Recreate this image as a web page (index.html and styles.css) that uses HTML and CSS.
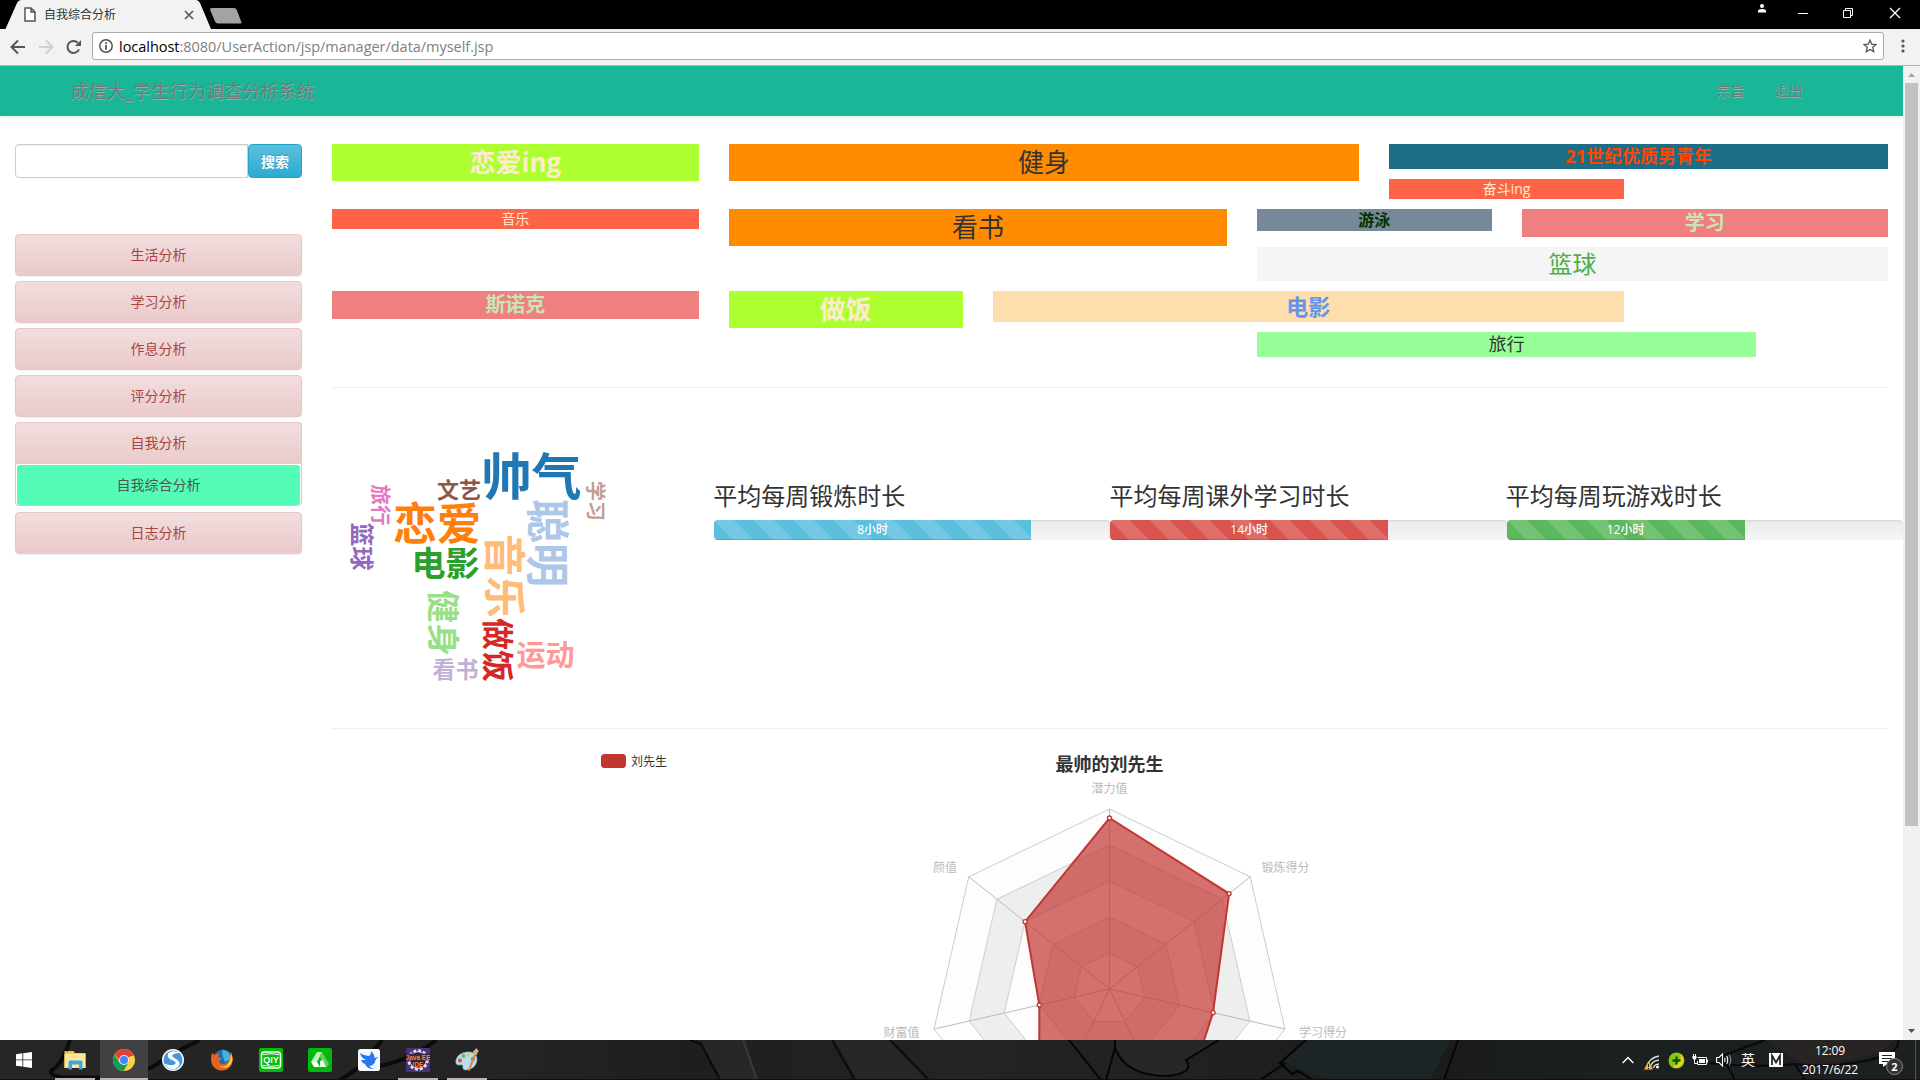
FILE: index.html
```html
<!DOCTYPE html>
<html lang="zh-CN">
<head>
<meta charset="utf-8">
<title>自我综合分析</title>
<link rel="stylesheet" href="styles.css">
</head>
<body>
<div class="window">
  <header class="tabstrip">
    <svg class="tab-shape" width="250" height="29" viewBox="0 0 250 29">
      <path d="M0 29H5.5L17 3Q18.500 0 21 0H196Q198.500 0 200 3L211 29Z" fill="#f2f2f2"/>
      <path d="M212.500 8H234Q236 8 236.800 10L241.500 22.500Q242 23.500 240 23.500H218Q216 23.500 215 21.500L210 9.500Q209.600 8 212.500 8Z" fill="#a3a3a3"/>
    </svg>
    <div class="tab">
      <svg width="12" height="16" viewBox="0 0 12 16"><path d="M1 1H7L11 5V14H1ZM7 1V5H11" fill="#fff" stroke="#555" stroke-width="1.500"/></svg>
      <span class="tab-title">自我综合分析</span>
      <svg width="10" height="10" viewBox="0 0 10 10"><path d="M1 1L9 9M9 1L1 9" stroke="#5a5a5a" stroke-width="1.700"/></svg>
    </div>
    <div class="window-controls">
      <svg class="profile" width="8" height="9" viewBox="0 0 8 9"><circle cx="4" cy="2" r="2" fill="#fff"/><path d="M0 8.500V7Q0 5 4 5T8 7V8.500Z" fill="#fff"/></svg>
      <svg width="46" height="26" viewBox="0 0 46 26"><path d="M18 13.500H28" stroke="#fff"/></svg>
      <svg width="46" height="26" viewBox="0 0 46 26"><path d="M17.500 10.500H24.500V17.500H17.500ZM19.500 10V8.500H26.500V15.500H25" fill="none" stroke="#fff"/></svg>
      <svg width="46" height="26" viewBox="0 0 46 26"><path d="M18 8L28 18M28 8L18 18" stroke="#fff" stroke-width="1.300"/></svg>
    </div>
  </header>

  <div class="toolbar">
    <svg class="nav-icons" width="73" height="20" viewBox="0 0 73 20" fill="none" stroke-width="2">
      <path d="M17 10H4M10 3.500L3.500 10L10 16.500" stroke="#555"/>
      <path d="M31 10H44M38 3.500L44.500 10L38 16.500" stroke="#d0d0d0"/>
      <path d="M71.500 12.300A6 6 0 1 1 70.300 5.700" stroke="#555" transform="translate(-.5 0)"/>
      <path d="M73 3V9H67Z" fill="#555"/>
    </svg>
    <div class="address">
      <svg width="14" height="14" viewBox="0 0 14 14"><circle cx="7" cy="7" r="6.200" fill="none" stroke="#555" stroke-width="1.500"/><path d="M7 6V10.800M7 3.200V5" stroke="#555" stroke-width="1.800"/></svg>
      <span class="url"><b>localhost</b>:8080/UserAction/jsp/manager/data/myself.jsp</span>
      <svg width="14" height="14" viewBox="0 0 14 14"><path d="M7 1.200L8.700 5.100L13 5.500L9.800 8.300L10.700 12.600L7 10.400L3.300 12.600L4.200 8.300L1 5.500L5.300 5.100Z" fill="none" stroke="#555" stroke-width="1.300"/></svg>
    </div>
    <svg class="menu-dots" width="4" height="14" viewBox="0 0 4 14" fill="#555"><circle cx="2" cy="2" r="1.600"/><circle cx="2" cy="7" r="1.600"/><circle cx="2" cy="12" r="1.600"/></svg>
  </div>

  <div class="viewport">
    <div class="page">
      <nav class="navbar">
        <span class="brand">成信大_学生行为调查分析系统</span>
        <span class="nav-link">宗旨</span>
        <span class="nav-link">退出</span>
      </nav>
      <div class="content">
        <aside class="sidebar">
          <form class="search"><input type="text" aria-label="搜索"><button type="button">搜索</button></form>
          <a class="item">生活分析</a>
          <a class="item">学习分析</a>
          <a class="item">作息分析</a>
          <a class="item">评分分析</a>
          <div class="group">
            <a class="item item-open">自我分析</a>
            <div class="sub"><a class="sub-active">自我综合分析</a></div>
          </div>
          <a class="item">日志分析</a>
        </aside>

        <main class="main">
          <section class="tags">
            <span class="tag c1 s3 lime">恋爱ing</span>
            <span class="tag c4 s5 orange">健身</span>
            <span class="tag c9 s4 teal">21世纪优质男青年</span>
            <span class="tag r2 c9 s2 tomato">奋斗ing</span>
            <span class="tag r3 c1 s3 tomato">音乐</span>
            <span class="tag r3 c4 s4 orange">看书</span>
            <span class="tag r3 c8 s2 slate">游泳</span>
            <span class="tag r3 c10 s3 coral">学习</span>
            <span class="tag r4 c8 s5 smoke">篮球</span>
            <span class="tag r5 c1 s3 coral">斯诺克</span>
            <span class="tag r5 c4 s2 lime">做饭</span>
            <span class="tag r5 c6 s5 wheat">电影</span>
            <span class="tag r6 c8 s4 mint">旅行</span>
          </section>

          <section class="stats">
            <svg class="cloud" width="382" height="340" viewBox="332 388 382 340">
              <g transform="translate(531.500 475.500)"><text dy="-.06em" font-size="50" fill="#1f77b4">帅气</text></g>
              <g transform="translate(547.200 543) rotate(90)"><text dy="-.06em" font-size="44" fill="#aec7e8">聪明</text></g>
              <g transform="translate(437 524)"><text dy="-.06em" font-size="44" fill="#ff7f0e">恋爱</text></g>
              <g transform="translate(505 576) rotate(90)"><text dy="-.06em" font-size="42" fill="#ffbb78">音乐</text></g>
              <g transform="translate(445.500 563.500)"><text dy="-.06em" font-size="34" fill="#2ca02c">电影</text></g>
              <g transform="translate(443.500 623) rotate(90)"><text dy="-.06em" font-size="33" fill="#98df8a">健身</text></g>
              <g transform="translate(498 650) rotate(90)"><text dy="-.06em" font-size="32" fill="#d62728">做饭</text></g>
              <g transform="translate(545.500 655)"><text dy="-.06em" font-size="29" fill="#ff9896">运动</text></g>
              <g transform="translate(362 546.500) rotate(90)"><text dy="-.06em" font-size="24" fill="#9467bd">篮球</text></g>
              <g transform="translate(455.500 669)"><text dy="-.06em" font-size="23" fill="#c5b0d5">看书</text></g>
              <g transform="translate(459 489)"><text dy="-.06em" font-size="22" fill="#8c564b">文艺</text></g>
              <g transform="translate(595.600 501) rotate(90)"><text dy="-.06em" font-size="20" fill="#c49c94">学习</text></g>
              <g transform="translate(380.700 505) rotate(90)"><text dy="-.06em" font-size="20.500" fill="#e377c2">旅行</text></g>
            </svg>
            <div class="bars">
              <div class="bar-col"><h3>平均每周锻炼时长</h3><div class="progress"><div class="fill info" style="width:80%">8小时</div></div></div>
              <div class="bar-col"><h3>平均每周课外学习时长</h3><div class="progress"><div class="fill danger" style="width:70%">14小时</div></div></div>
              <div class="bar-col"><h3>平均每周玩游戏时长</h3><div class="progress"><div class="fill success" style="width:60%">12小时</div></div></div>
            </div>
          </section>

          <svg class="radar" id="radar" width="1556" height="311" viewBox="332 729 1556 311">
            <rect x="601" y="754" width="25" height="14" rx="3.500" fill="#c23531"/>
            <text x="631" y="766" fill="#333">刘先生</text>
            <text class="radar-title" x="1109.500" y="770.500">最帅的刘先生</text>
            <g id="web"></g>
            <g fill="#bbb">
              <text x="1109.500" y="792.500" text-anchor="middle">潜力值</text>
              <text x="957" y="871.500" text-anchor="end">颜值</text>
              <text x="1261.500" y="871.500">锻炼得分</text>
              <text x="919.500" y="1036.500" text-anchor="end">财富值</text>
              <text x="1299" y="1036.500">学习得分</text>
            </g>
          </svg>
        </main>
      </div>
    </div>
    <div class="scrollbar">
      <svg width="17" height="17" viewBox="0 0 17 17"><path d="M5 11L8.500 7L12 11Z" fill="#a3a3a3"/></svg>
      <div class="thumb"></div>
      <svg width="17" height="17" viewBox="0 0 17 17"><path d="M5 6L8.500 10L12 6Z" fill="#505050"/></svg>
    </div>
  </div>

  <footer class="taskbar">
    <svg class="wallpaper" width="1920" height="40" viewBox="0 0 1920 40" fill="none">
      <path d="M70 0Q62 25 52 30Q48 35 60 37L115 38Q145 35 170 15L200 0M340 40L360 27L382 0M368 28Q410 22 436 0" stroke="#0b0b0b" stroke-width="4"/>
      <path d="M700 0L722 40H758L746 0ZM835 0L858 40H925L893 0Z" fill="#272628"/>
      <path d="M690 0L701 4L720 40M832 0L855 40M890 0L929 40" stroke="#0a0a0a" stroke-width="2"/>
      <path d="M743 0L757 40" stroke="#3a3a3b" stroke-width="2"/>
      <path d="M1116 0H1220L1187 20Q1190 35 1168 36Q1125 38 1114 0Z" fill="#272725"/>
      <path d="M1306 0H1450L1430 40H1330L1283 22Z" fill="#1c2425"/>
      <path d="M1069 0L1101 40M1115 0V8Q1125 36 1168 36Q1195 33 1186 20L1219 0M1115 8L1106 40M1306 0L1280 23L1284 24L1260 40M1280 23L1292 34L1298 31L1313 40M1458 0L1444 40" stroke="#050505" stroke-width="2"/>
      <path d="M1768 0H1895L1880 12Q1840 26 1800 23Z" fill="#292424"/>
      <path d="M1765 0L1722 16L1735 40M1710 23Q1760 28 1795 24L1805 40M1795 24Q1840 30 1888 15Q1900 8 1898 0" stroke="#080909" stroke-width="2"/>
      <path d="M0 39.500H1920" stroke="#100e10"/>
      <path d="M1915.500 0V40" stroke="#555"/>
    </svg>
    <div class="apps">
      <span class="app start"><svg width="18" height="18" viewBox="0 0 18 18" fill="#fff"><path d="M1 3.200L7.400 2.300V8.400H1ZM8.200 2.200L17 1V8.400H8.200ZM1 9.300H7.400V15.600L1 14.700ZM8.200 9.300H17V17L8.200 15.800Z"/></svg></span>
      <span class="app running"><svg width="24" height="24" viewBox="0 0 24 24"><path d="M1.500 3H10.500L12 5H22.500V20H1.500Z" fill="#f6c64b"/><path d="M1.500 6H22.500V20H1.500Z" fill="#ffe695"/><path d="M5.500 21.500V14Q5.500 12.500 7 12.500H18Q19.500 12.500 19.500 14V21.500H16V16.500H9V21.500Z" fill="#38a8e8"/><path d="M3 3.500H5" stroke="#29a0e0"/></svg></span>
      <span class="app running current"><svg width="24" height="24" viewBox="0 0 24 24"><circle cx="12" cy="12" r="11" fill="#ffd042"/><path d="M12 12L2.470 6.500A11 11 0 0 1 21.500 6.500Z" fill="#db4437"/><path d="M2.470 6.500A11 11 0 0 0 11.500 23L16.500 14.500L12 12L7.500 15Z" fill="#109d58"/><path d="M3 6L8 14.500L12 8H21.500A11 11 0 0 0 3 6Z" fill="#db4437"/><circle cx="12" cy="12" r="5" fill="#f1f1f1"/><circle cx="12" cy="12" r="4" fill="#4285f4"/></svg></span>
      <span class="app"><svg width="24" height="24" viewBox="0 0 24 24"><circle cx="12" cy="12" r="11" fill="#f5fafd"/><circle cx="12" cy="12" r="9.500" fill="#4596de"/><path d="M19.500 5Q10 1 7 6Q5.500 10 12 12.500Q16.500 14.500 13.500 16.500Q9.500 18.500 3.500 15.500Q8 23 15 20.500Q21 17 17 12.500Q15 10.500 12 9Q10 7.500 13 6Q16 5.200 19.500 5Z" fill="#fff"/></svg></span>
      <span class="app"><svg width="24" height="24" viewBox="0 0 24 24"><circle cx="13" cy="11" r="9.500" fill="#1b6fb4"/><path d="M12 2Q20 2 21 11L15 14Q12 8 12 2Z" fill="#46b4dc"/><path d="M2 5L5 7Q7 5 9 6L8 9L12 11L9 13Q10 17 15 16Q20 14 20 9L21 4Q25 13 20 19Q15 24 8 22Q1 19 1 11Q1 8 2 5Z" fill="#e66322"/><path d="M21 5Q25 14 18 19Q13 21 9 18Q20 21 21 5Z" fill="#ffc52e"/></svg></span>
      <span class="app"><svg width="24" height="24" viewBox="0 0 24 24"><rect width="24" height="24" rx="2" fill="#00be06"/><rect x="2.500" y="4" width="19" height="16" rx="3" fill="none" stroke="#fff" stroke-width="1.500"/><path d="M4 6.500Q12 5 20 6.500M4 17.500Q12 19 20 17.500" stroke="#fff" fill="none"/><text class="qiy" x="12" y="15.300" text-anchor="middle">QIY</text></svg></span>
      <span class="app"><svg width="24" height="24" viewBox="0 0 24 24"><rect width="24" height="24" rx="2" fill="#00b90d"/><path d="M9 4H14L9 14H3Z" fill="#c9efc8"/><path d="M3 14H9L12 19H6Z" fill="#fff"/><path d="M14 4L21 16L18 20L12 9Z" fill="#62ce62"/><path d="M12 13L15 12L18 19H12Z" fill="#eaf7e7"/></svg></span>
      <span class="app"><svg width="24" height="24" viewBox="0 0 24 24"><rect x="1" y="1" width="22" height="22" rx="2.500" fill="#f5faff"/><path d="M3 5Q7 8 12 8Q14 7 14 3Q18 7 17.500 10L22 8.500Q18 11 18 14Q16 18 12 18Q14 20 17 21Q10 21 8 16Q5 15 4 12L9 12Q4 10 3 5Z" fill="#2877ed"/></svg></span>
      <span class="app running"><svg width="24" height="24" viewBox="0 0 24 24"><rect width="24" height="24" rx="1" fill="#49327a"/><circle cx="12" cy="12" r="9.200" fill="none" stroke="#e7e3ea" stroke-width="3" stroke-dasharray="3 1.800"/><circle cx="12" cy="12" r="8.300" fill="#30204a" stroke="#e7e3ea"/><rect y="5.500" width="24" height="7" fill="#3a2650"/><text class="eclipse" x="12" y="11.500" text-anchor="middle">Java EE</text><text class="eclipse" x="12" y="18.500" text-anchor="middle">IDE</text></svg></span>
      <span class="app running"><svg width="24" height="24" viewBox="0 0 24 24"><path d="M12 4Q22 3 22 12Q21 21 11 22Q7 22 8 18Q8 16 4 17Q0 17 1 12Q3 5 12 4Z" fill="#b9dcee" stroke="#8eb8cf" stroke-width=".6"/><circle cx="5" cy="12.500" r="2" fill="#e24c3c"/><circle cx="8.500" cy="8" r="2" fill="#67bd4c"/><circle cx="13.500" cy="6.800" r="1.800" fill="#f5c63c"/><circle cx="18" cy="11" r="2" fill="#3c83d6"/><path d="M13 22L19 6L21 7L15 22Q14 24 13 22Z" fill="#e08a2c"/><path d="M18 3Q20 3 21 0L24 3Q22 4 22 7L19 6Z" fill="#d9b084"/></svg></span>
    </div>
    <div class="tray">
      <svg width="12" height="8" viewBox="0 0 12 8"><path d="M.7 7L6 1.500L11.300 7" fill="none" stroke="#fff" stroke-width="1.400"/></svg>
      <svg class="wifi" width="16" height="16" viewBox="0 0 16 16"><g fill="none" stroke="#ddd" stroke-width="1.400"><path d="M3 14Q4 4 15 2M6 14Q7 7 15 6M9.500 14Q10 10.500 15 10"/></g><circle cx="13.500" cy="13" r="1.500" fill="#fff"/><path d="M0 15.500L4.500 7L9 15.500Z" fill="#f6b623"/><path d="M4.500 10V13M4.500 14V15" stroke="#222"/></svg>
      <svg class="shield" width="17" height="17" viewBox="0 0 17 17"><circle cx="8.500" cy="8.500" r="8" fill="#86c714"/><path d="M13 2A8 8 0 0 1 4 15Q13 13 13 2Z" fill="#f5cf21"/><path d="M8.500 4.500V12.500M4.500 8.500H12.500" stroke="#174d13" stroke-width="2.300"/></svg>
      <svg class="power" width="17" height="12" viewBox="0 0 17 12"><path d="M5.500 3.500H14.500V10.500H5.500V7M15.500 5.500V8.500M2.500 5V9.500H5M1.500 0V2M3.500 0V2" fill="none" stroke="#fff"/><path d="M.5 2H4.500V4L3.500 5.500H1.500L.5 4ZM7 5H13V9H7Z" fill="#fff"/></svg>
      <svg class="sound" width="17" height="14" viewBox="0 0 17 14" fill="none" stroke="#fff" stroke-width="1.100"><path d="M.6 4.500H3L6.500 1V13L3 9.500H.6ZM8.500 5Q9.500 7 8.500 9M10.700 3Q12.700 7 10.700 11"/><path d="M13 1.500Q16.500 7 13 12.500" stroke="#888"/></svg>
      <span class="ime">英</span>
      <svg class="mbox" width="14" height="14" viewBox="0 0 14 14"><rect width="14" height="14" fill="#fff"/><path d="M3 12V2.500L7 9.500L11 2.500V12" fill="none" stroke="#222" stroke-width="1.700"/></svg>
      <div class="clock"><span>12:09</span><span>2017/6/22</span></div>
      <div class="notice">
        <svg width="16" height="15" viewBox="0 0 16 15"><path d="M0 0H16V12H8L4 15V12H0Z" fill="#fff"/><path d="M3 3.500H13M3 6.500H13M3 9.500H9" stroke="#222"/></svg>
        <span class="badge">2</span>
      </div>
    </div>
  </footer>
</div>
<script src="radar.js"></script>
</body>
</html>
```
FILE: styles.css
```css
* { box-sizing: border-box; }
body {
  margin: 0;
  background: #fff;
  color: #333;
  font: 14px/20px "Open Sans", "Noto Sans CJK SC", sans-serif;
  overflow: hidden;
}
svg { display: block; flex: none; }
.window { display: flex; flex-direction: column; width: 1920px; height: 1080px; }

.tabstrip { position: relative; display: flex; justify-content: space-between; height: 29px; background: #000; }
.tab-shape { position: absolute; left: 0; top: 0; }
.tab { position: relative; display: flex; align-items: center; width: 194px; padding-left: 24px; }
.tab-title { flex: 1; margin-left: 8px; font-size: 12px; line-height: 28px; }
.window-controls { display: flex; padding-right: 2px; }
.profile { margin: 4px 14px 0 0; }

.toolbar {
  display: flex; align-items: center; height: 37px; padding: 0 10px 2px 8px;
  background: #f2f2f2; border-bottom: 1px solid #b3b3b3;
}
.nav-icons { margin-top: 1px; }
.address {
  display: flex; align-items: center; width: 1792px; height: 28px; margin: 0 17px 0 11px; padding: 0 6px;
  background: #fff; border: 1px solid #a9a9a9; border-radius: 3px;
}
.url { flex: 1; margin-left: 6px; padding-top: 1px; color: #808080; font-size: 14.5px; line-height: 25px; letter-spacing: -.03px; white-space: nowrap; }
.url b { color: #000; font-weight: 400; }

.viewport { display: flex; height: 974px; }
.page { width: 1903px; height: 974px; overflow: hidden; }
.navbar {
  display: flex; align-items: center; height: 50px; padding: 0 85px 0 71px;
  background: #1bb698; box-shadow: 0 1px 5px rgba(0, 0, 0, .1);
  color: #777; text-shadow: 0 1px 0 rgba(255, 255, 255, .3);
}
.brand { flex: 1; font-size: 18px; letter-spacing: .17px; }
.nav-link { padding: 0 15px; }
.content { display: flex; padding-top: 28px; }

.sidebar { display: flex; flex: none; flex-direction: column; width: 317.17px; padding: 0 15px; }
.search { display: flex; height: 34px; margin-bottom: 56px; }
.search input {
  width: 233px; border: 1px solid #ccc; border-radius: 4px 0 0 4px;
  box-shadow: inset 0 1px 1px rgba(0, 0, 0, .075);
}
.search button {
  width: 54px; padding: 0; border: 1px solid #28a4c9; border-radius: 4px;
  background: linear-gradient(#5bc0de, #2aabd2);
  color: #fff; font: bold 14px/20px "Noto Sans CJK SC", sans-serif;
  text-shadow: 0 -1px 0 rgba(0, 0, 0, .2);
}
.item {
  height: 42px; margin-bottom: 5px; border: 1px solid #e9c6ca; border-radius: 4px;
  background: linear-gradient(#f2dede, #eacacb);
  box-shadow: 0 1px 2px rgba(0, 0, 0, .06);
  color: #a94442; line-height: 40px; text-align: center;
}
.group { margin-bottom: 6px; }
.item-open { display: block; margin-bottom: 0; border-bottom: 0; border-radius: 4px 4px 0 0; box-shadow: none; }
.sub { height: 42px; padding: 1px; border: 1px solid #e3c5c9; border-top: 0; border-radius: 0 0 4px 4px; }
.sub-active { display: block; height: 40px; border-radius: 3px; background: #54fcb7; color: #555; line-height: 40px; text-align: center; }

.main { display: flex; flex: none; flex-direction: column; width: 1585.83px; padding: 0 15px; }
.tags {
  display: grid; grid-template-columns: repeat(12, 1fr); grid-template-rows: 35px 30px 38px 44px 41px 55px;
  column-gap: 30px; align-items: start; height: 244px; border-bottom: 1px solid #eee;
}
.tag { grid-row: 1; text-align: center; white-space: nowrap; }
.r2 { grid-row: 2; } .r3 { grid-row: 3; } .r4 { grid-row: 4; } .r5 { grid-row: 5; } .r6 { grid-row: 6; }
.c1 { grid-column-start: 1; } .c4 { grid-column-start: 4; } .c6 { grid-column-start: 6; }
.c8 { grid-column-start: 8; } .c9 { grid-column-start: 9; } .c10 { grid-column-start: 10; }
.s2 { grid-column-end: span 2; } .s3 { grid-column-end: span 3; }
.s4 { grid-column-end: span 4; } .s5 { grid-column-end: span 5; }
.lime { background: #adff2f; color: #ffebcd; font-size: 26px; font-weight: 700; line-height: 37px; }
.orange { background: #ff8c00; font-size: 26px; line-height: 37px; }
.teal { background: #1c6d85; color: #ff4500; font-size: 18px; font-weight: 700; line-height: 25px; }
.tomato { background: #ff6347; color: #ffebcd; font-size: 14px; line-height: 20px; }
.slate { background: #789; color: #030; font-size: 16px; font-weight: 700; line-height: 22px; }
.coral { background: #f08080; color: #c7e6b6; font-size: 20px; font-weight: 700; line-height: 28px; }
.smoke { background: #f5f5f5; color: #4cae4c; font-size: 24px; line-height: 34px; }
.wheat { background: #ffdead; color: #6495ed; font-size: 22px; font-weight: 700; line-height: 31px; }
.mint { background: #98ff98; font-size: 18px; line-height: 25px; }

.stats { display: flex; height: 341px; border-bottom: 1px solid #eee; }
.cloud text { font-family: "Noto Sans CJK SC", sans-serif; font-weight: 700; text-anchor: middle; dominant-baseline: central; }
.bars { display: flex; flex: none; width: 1189px; padding-top: 94px; }
.bar-col { flex: 1; }
.bar-col h3 { margin: 0 0 11px; font-size: 24px; font-weight: 400; line-height: 27px; white-space: nowrap; text-indent: -1px; }
.progress { height: 20px; overflow: hidden; border-radius: 4px; background: linear-gradient(#ebebeb, #f5f5f5); box-shadow: inset 0 1px 2px rgba(0, 0, 0, .1); }
.fill {
  height: 20px; color: #fff; font-size: 12px; font-weight: 500; line-height: 20px; text-align: center;
  background-image: linear-gradient(45deg, rgba(255, 255, 255, .15) 25%, transparent 25%, transparent 50%, rgba(255, 255, 255, .15) 50%, rgba(255, 255, 255, .15) 75%, transparent 75%, transparent);
  background-size: 40px 40px; box-shadow: inset 0 -1px 0 rgba(0, 0, 0, .15);
}
.info { background-color: #5bc0de; }
.danger { background-color: #d9534f; }
.success { background-color: #5cb85c; }
.radar text { font-size: 12px; }
.radar .radar-title { font-size: 18px; font-weight: 700; fill: #333; text-anchor: middle; }

.scrollbar { display: flex; flex-direction: column; width: 17px; background: #f1f1f1; }
.thumb { width: 13px; height: 743px; margin: 0 auto auto 2px; background: #c1c1c1; }

.taskbar {
  position: relative; display: flex; justify-content: space-between; height: 40px;
  background: linear-gradient(90deg, #262626 0, #232323 28%, #201e1d 36%, #242325 50%, #222120 62%, #1a1b1b 73%, #1b2020 85%, #1d1f20 100%);
}
.wallpaper { position: absolute; left: 0; top: 0; }
.apps, .tray { position: relative; display: flex; }
.app { display: flex; align-items: center; justify-content: center; width: 49px; height: 40px; }
.start { width: 50px; padding-right: 2px; }
.running { background: linear-gradient(#b9b4b6, #b9b4b6) center bottom / 40px 2px no-repeat; }
.current { background: linear-gradient(#b9b4b6, #b9b4b6) center bottom / 48px 2px no-repeat, linear-gradient(#414141, #414141) center / 48px 40px no-repeat; }
.qiy { font: 700 9px "Liberation Sans", sans-serif; fill: #fff; }
.eclipse { font: 700 6.500px "Liberation Sans", sans-serif; fill: #f58a22; }

.tray { align-items: center; padding-right: 17px; color: #fff; }
.wifi { margin: 3px 0 0 10px; }
.shield { margin-left: 8px; }
.power { margin-left: 7px; }
.sound { margin-left: 7px; }
.ime { margin-left: 8px; font-size: 14px; }
.mbox { margin-left: 14px; }
.clock { display: flex; flex-direction: column; width: 60px; margin-left: 17px; font-size: 12px; line-height: 19px; text-align: center; letter-spacing: -.1px; }
.notice { position: relative; width: 24px; height: 40px; margin-left: 19px; padding-top: 12px; }
.badge {
  position: absolute; left: 7px; top: 18px; width: 17px; height: 17px; border: 1px solid #8b8b8b; border-radius: 50%;
  background: #333; font-size: 11px; font-weight: 700; line-height: 15px; text-align: center;
}
```
FILE: radar.js
```js
const center = [1109.5, 989];
const radius = 180;
const axes = 7;
const values = [0.95, 0.85, 0.59, 0.85, 0.9, 0.4, 0.6];

const point = (i, k) => {
  const a = (i * 2 * Math.PI) / axes;
  return [center[0] + Math.sin(a) * radius * k, center[1] - Math.cos(a) * radius * k];
};
const ring = (k) => Array.from({ length: axes }, (_, i) => point(i, k).join(",")).join(" ");

let out = "";
for (let level = 5; level > 0; level--) {
  const fill = level % 2 ? "#fdfdfd" : "#eeeeee";
  out += `<polygon points="${ring(level / 5)}" fill="${fill}" stroke="#ccc"/>`;
}
for (let i = 0; i < axes; i++) {
  const [x, y] = point(i, 1);
  out += `<line x1="${center[0]}" y1="${center[1]}" x2="${x}" y2="${y}" stroke="#bbb"/>`;
}
const data = values.map((v, i) => point(i, v));
out += `<polygon points="${data.map((p) => p.join(",")).join(" ")}" fill="#c23531" fill-opacity=".7" stroke="#c23531" stroke-width="2"/>`;
for (const [x, y] of data) {
  out += `<circle cx="${x}" cy="${y}" r="2" fill="#fff" stroke="#c23531" stroke-width="1.3"/>`;
}
document.getElementById("web").innerHTML = out;
```
